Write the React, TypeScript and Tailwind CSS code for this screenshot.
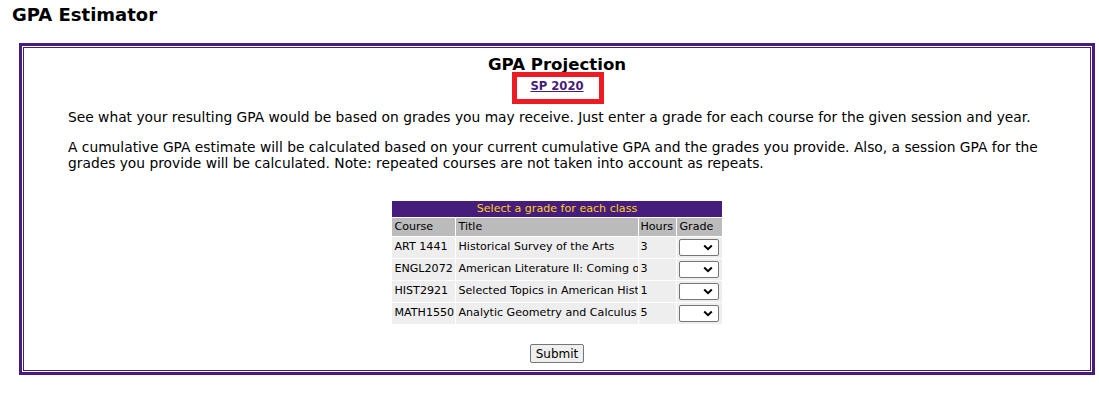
import React from 'react';

const courses = [
  { code: 'ART 1441', title: 'Historical Survey of the Arts', hours: '3' },
  { code: 'ENGL2072', title: 'American Literature II: Coming of Age', hours: '3' },
  { code: 'HIST2921', title: 'Selected Topics in American History', hours: '1' },
  { code: 'MATH1550', title: 'Analytic Geometry and Calculus I', hours: '5' },
];

const GradeSelect = () => (
  <div className="w-[40px] h-[17px] bg-white border border-[#767676] rounded-[2px] flex items-center justify-end pr-[5px]">
    <svg width="10" height="7" viewBox="0 0 10 7">
      <path d="M1.2 1.5 L5 5.2 L8.8 1.5" fill="none" stroke="#000" strokeWidth="2" />
    </svg>
  </div>
);

export default function App() {
  return (
    <div className="relative bg-white text-black min-h-[393px]" style={{ fontFamily: 'Verdana, "DejaVu Sans", sans-serif' }}>
      <h1 className="text-[18px] font-bold pl-[12px] pt-[4px] h-[43px] leading-[22px]">GPA Estimator</h1>

      {/* Outer double border */}
      <div className="ml-[19px] w-[1076px] border-[3px] border-[#461d7c] p-px">
        <div className="border border-[#461d7c] h-[324px] px-[44px]">
          <h2 className="text-center text-[16.6px] font-bold leading-[20px] mt-[7px]">GPA Projection</h2>
          <div className="text-center leading-[16px] mt-[2px]">
            <a href="#" className="text-[11.6px] font-bold text-[#461d7c] underline">SP 2020</a>
          </div>

          <p className="text-[13.8px] leading-[16px] mt-[15px]">
            See what your resulting GPA would be based on grades you may receive. Just enter a grade for each course for the given session and year.
          </p>
          <p className="text-[13.8px] leading-[16px] mt-[14px]">
            A cumulative GPA estimate will be calculated based on your current cumulative GPA and the grades you provide. Also, a session GPA for the grades you provide will be calculated. Note: repeated courses are not taken into account as repeats.
          </p>

          <table className="mx-auto mt-[29px] text-[11.1px] border-separate border-spacing-px table-fixed w-[331px]">
            <colgroup>
              <col className="w-[63px]" />
              <col className="w-[182px]" />
              <col className="w-[37px]" />
              <col className="w-[44px]" />
            </colgroup>
            <thead>
              <tr>
                <th colSpan={4} className="bg-[#461d7c] text-[#fdd023] font-normal h-[16px] leading-[14px] text-center">
                  Select a grade for each class
                </th>
              </tr>
              <tr className="bg-[#bbbbbb]">
                <th className="font-normal text-left pl-[2px] h-[18px]">Course</th>
                <th className="font-normal text-left pl-[2px]">Title</th>
                <th className="font-normal text-left pl-px overflow-hidden whitespace-nowrap">Hours</th>
                <th className="font-normal text-left pl-[2px]">Grade</th>
              </tr>
            </thead>
            <tbody>
              {courses.map((c) => (
                <tr key={c.code} className="bg-[#eeeeee]">
                  <td className="pl-[2px] h-[21px] whitespace-nowrap overflow-hidden">{c.code}</td>
                  <td className="pl-[2px] whitespace-nowrap overflow-hidden">{c.title}</td>
                  <td className="pl-px">{c.hours}</td>
                  <td className="pl-[2px]">
                    <GradeSelect />
                  </td>
                </tr>
              ))}
            </tbody>
          </table>

          <div className="flex justify-center mt-[19px]">
            <button className="h-[19px] px-[5px] text-[12px] leading-[16px] bg-[#efefef] border border-[#767676] rounded-[2px]">
              Submit
            </button>
          </div>
        </div>
      </div>

      {/* Red highlight annotation */}
      <div className="absolute left-[512px] top-[72px] w-[92px] h-[32px] border-[5px] border-[#ed1c24]" />
    </div>
  );
}
